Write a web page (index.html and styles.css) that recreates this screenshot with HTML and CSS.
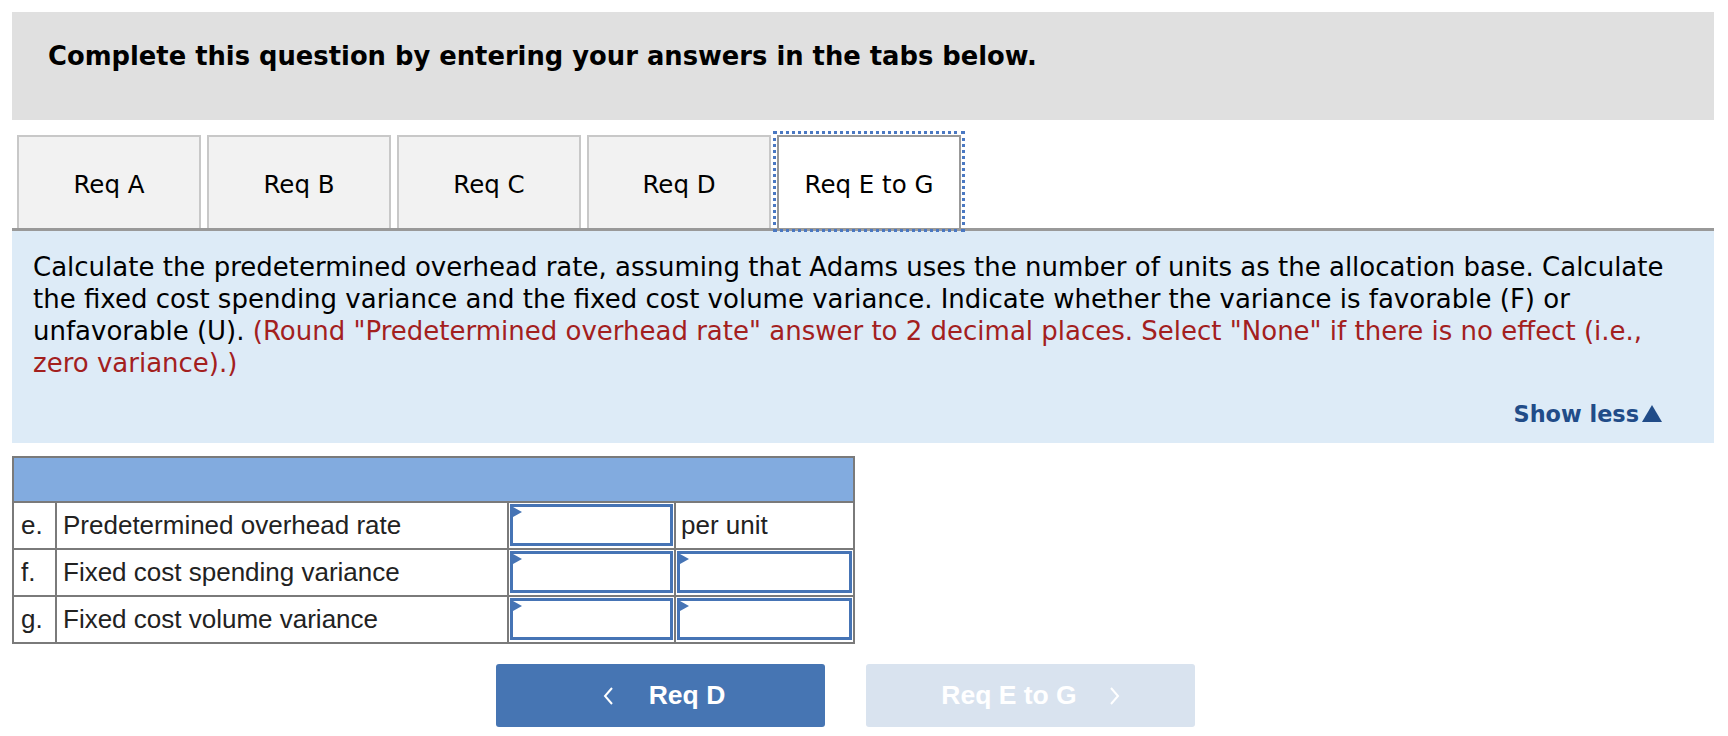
FILE: index.html
```html
<!DOCTYPE html>
<html>
<head>
<meta charset="utf-8">
<link rel="stylesheet" href="styles.css">
</head>
<body>
<div class="page">
  <div class="header">Complete this question by entering your answers in the tabs below.</div>
  <div class="tabs">
    <div class="tab">Req A</div>
    <div class="tab">Req B</div>
    <div class="tab">Req C</div>
    <div class="tab">Req D</div>
    <div class="tab active">Req E to G</div>
  </div>
  <div class="panel">
    <p class="question">Calculate the predetermined overhead rate, assuming that Adams uses the number of units as the allocation base. Calculate the fixed cost spending variance and the fixed cost volume variance. Indicate whether the variance is favorable (F) or unfavorable (U). <span class="note">(Round "Predetermined overhead rate" answer to 2 decimal places. Select "None" if there is no effect (i.e., zero variance).)</span></p>
    <div class="showless">Show less<span class="tri"></span></div>
  </div>
  <table class="grid">
    <colgroup>
      <col class="c1"><col class="c2"><col class="c3"><col class="c4">
    </colgroup>
    <tr class="head"><td colspan="4"></td></tr>
    <tr>
      <td class="letter">e.</td>
      <td class="label">Predetermined overhead rate</td>
      <td class="inp"><div class="box"></div></td>
      <td class="unit">per unit</td>
    </tr>
    <tr>
      <td class="letter">f.</td>
      <td class="label">Fixed cost spending variance</td>
      <td class="inp"><div class="box"></div></td>
      <td class="inp"><div class="box"></div></td>
    </tr>
    <tr>
      <td class="letter">g.</td>
      <td class="label">Fixed cost volume variance</td>
      <td class="inp"><div class="box"></div></td>
      <td class="inp"><div class="box"></div></td>
    </tr>
  </table>
  <div class="nav">
    <div class="btn prev"><svg class="chev" width="12" height="20" viewBox="0 0 12 20"><polyline points="9,2 2,10 9,18" fill="none" stroke="#fff" stroke-width="2"/></svg><span>Req D</span></div>
    <div class="btn next disabled"><span>Req E to G</span><svg class="chev" width="12" height="20" viewBox="0 0 12 20"><polyline points="3,2 10,10 3,18" fill="none" stroke="#fff" stroke-width="2"/></svg></div>
  </div>
</div>
</body>
</html>
```
FILE: styles.css
```css
html, body {
  margin: 0;
  padding: 0;
  background: #fff;
}
body {
  font-family: "DejaVu Sans", Verdana, sans-serif;
  color: #000;
}
.page {
  padding: 12px 14px 0 12px;
}
.header {
  background: #e0e0e0;
  height: 108px;
  box-sizing: border-box;
  padding: 28px 0 0 36px;
  font-weight: bold;
  font-size: 25.8px;
  line-height: 32px;
}
.tabs {
  display: flex;
  gap: 6px;
  margin-top: 15px;
  padding-left: 5px;
  border-bottom: 3px solid #999;
  height: 93px;
}
.tab {
  width: 184px;
  box-sizing: border-box;
  height: 93px;
  background: #f2f2f2;
  border: 2px solid #c8c8c8;
  border-bottom: none;
  display: flex;
  align-items: center;
  justify-content: center;
  font-size: 24.5px;
  padding-top: 3px;
}
.tab.active {
  background: #fff;
  border-color: #999;
  outline: 3px dotted #4a78c2;
  outline-offset: 1px;
}
.panel {
  background: #ddebf7;
  padding: 20px 52px 18px 21px;
  height: 212px;
  box-sizing: border-box;
}
.question {
  margin: 0 -38px 0 0;
  font-size: 26px;
  line-height: 32px;
}
.note {
  color: #a3201e;
}
.showless {
  margin-top: 22px;
  display: flex;
  justify-content: flex-end;
  align-items: center;
  gap: 3px;
  color: #214c88;
  font-weight: bold;
  font-size: 22.4px;
  line-height: 26px;
}
.tri {
  width: 0;
  height: 0;
  border-left: 10px solid transparent;
  border-right: 10px solid transparent;
  border-bottom: 17px solid #214c88;
  margin-top: -2px;
}
.grid {
  margin-top: 13px;
  border-collapse: collapse;
  table-layout: fixed;
  width: 841px;
  font-family: "Liberation Sans", Arial, sans-serif;
  font-size: 26px;
  color: #222;
}
.c1 { width: 43px; }
.c2 { width: 452px; }
.c3 { width: 167px; }
.c4 { width: 179px; }
.grid td {
  border: 2px solid #7a7a7a;
  height: 43px;
  padding: 0;
}
.grid tr.head td {
  background: #82abdf;
  height: 43px;
}
.letter {
  padding-left: 7px !important;
}
.label {
  padding-left: 6px !important;
}
.inp {
  padding: 1px !important;
  vertical-align: top;
}
.unit {
  padding-left: 5px !important;
}
.box {
  position: relative;
  height: 42px;
  border: 3px solid #4674b5;
  box-sizing: border-box;
  background: #fff;
}
.box::before {
  content: "";
  position: absolute;
  left: 0;
  top: 0;
  border-left: 9px solid #4674b5;
  border-top: 5px solid transparent;
  border-bottom: 5px solid transparent;
}
.nav {
  display: flex;
  gap: 41px;
  margin-top: 20px;
  padding-left: 484px;
}
.btn {
  width: 329px;
  height: 63px;
  border-radius: 3px;
  display: flex;
  align-items: center;
  justify-content: center;
  font-family: "Liberation Sans", Arial, sans-serif;
  font-weight: bold;
  font-size: 26.5px;
  color: #fff;
  box-sizing: border-box;
}
.btn.prev {
  background: #4675b3;
  gap: 34px;
  padding-left: 7px;
}
.btn.disabled {
  background: #d9e3ef;
  gap: 31px;
}
.chev {
  display: block;
}
```
